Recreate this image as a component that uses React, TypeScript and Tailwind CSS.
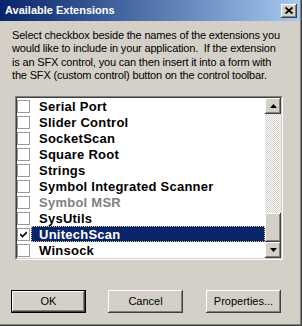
import { type ReactNode } from 'react'

type Ext = { name: string; checked?: boolean; disabled?: boolean; selected?: boolean }

const extensions: Ext[] = [
  { name: 'Serial Port' },
  { name: 'Slider Control' },
  { name: 'SocketScan' },
  { name: 'Square Root' },
  { name: 'Strings' },
  { name: 'Symbol Integrated Scanner' },
  { name: 'Symbol MSR', disabled: true },
  { name: 'SysUtils' },
  { name: 'UnitechScan', checked: true, selected: true },
  { name: 'Winsock' },
]

const raised =
  'bg-[#d4d0c8] shadow-[inset_-1px_-1px_#404040,inset_1px_1px_#ffffff,inset_-2px_-2px_#808080,inset_2px_2px_#d4d0c8]'

function Arrow({ dir }: { dir: 'up' | 'down' }) {
  return (
    <svg width="7" height="4" viewBox="0 0 7 4">
      {dir === 'up' ? <path d="M3.5 0L7 4H0z" fill="#000" /> : <path d="M0 0H7L3.5 4z" fill="#000" />}
    </svg>
  )
}

function Button({ children, isDefault }: { children: ReactNode; isDefault?: boolean }) {
  return (
    <div
      className={
        isDefault
          ? 'flex h-[23px] w-[75px] items-center justify-center border border-black bg-[#d4d0c8] shadow-[inset_-1px_-1px_#404040,inset_1px_1px_#ffffff,inset_-2px_-2px_#808080]'
          : `flex h-[23px] w-[75px] items-center justify-center ${raised}`
      }
    >
      <span className="text-[11px] leading-none text-black">{children}</span>
    </div>
  )
}

function Row({ ext }: { ext: Ext }) {
  return (
    <div className="flex h-[16px] items-center">
      <div className="flex h-[13px] w-[13px] shrink-0 items-center justify-center border border-[#9a9a9a] bg-white">
        {ext.checked && (
          <svg width="7" height="7" viewBox="0 0 7 7">
            <path d="M0 3L2.5 5.5L7 1" stroke="#000" strokeWidth="1.6" fill="none" />
          </svg>
        )}
      </div>
      <div
        className={
          ext.selected
            ? 'ml-[1px] flex h-[16px] flex-1 items-center bg-[#0a246a] pl-[8px] text-white outline outline-1 -outline-offset-1 outline-dotted outline-[#e8cf7a]'
            : 'ml-[1px] flex h-[16px] flex-1 items-center pl-[8px]'
        }
      >
        <span
          className={`text-[13px] font-bold leading-none tracking-[0.25px] ${
            ext.disabled ? 'text-[#808080]' : ext.selected ? 'text-white' : 'text-black'
          }`}
        >
          {ext.name}
        </span>
      </div>
    </div>
  )
}

export default function App() {
  return (
    <div
      className="h-[326px] w-[302px] overflow-hidden border-b border-r border-[#404040] bg-[#d4d0c8]"
      style={{ fontFamily: '"Liberation Sans", Arial, sans-serif' }}
    >
      <div className="flex h-full flex-col border-b border-r border-[#808080]">
        <header className="flex h-[21px] shrink-0 items-center bg-gradient-to-r from-[#0a246a] to-[#a6caf0] pl-[5px] pr-[3px]">
          <span className="flex-1 text-[11px] font-bold text-white">Available Extensions</span>
          <div className={`flex h-[14px] w-[16px] items-center justify-center ${raised}`}>
            <svg width="8" height="7" viewBox="0 0 8 7">
              <path d="M0.5 0.5L7.5 6.5M7.5 0.5L0.5 6.5" stroke="#000" strokeWidth="1.8" />
            </svg>
          </div>
        </header>

        <p className="mt-[8px] h-[54px] whitespace-pre pl-[12px] text-[11px] leading-[13.33px] tracking-[-0.17px] text-black">
          {'Select checkbox beside the names of the extensions you\nwould like to include in your application.  If the extension\nis an SFX control, you can then insert it into a form with\nthe SFX (custom control) button on the control toolbar.'}
        </p>

        <div className="ml-[15px] mt-[13px] h-[164px] w-[268px] border border-b-white border-l-[#808080] border-r-white border-t-[#808080]">
          <div className="flex h-full border border-b-[#d4d0c8] border-l-[#404040] border-r-[#d4d0c8] border-t-[#404040] bg-white">
            <div className="flex flex-1 flex-col">
              {extensions.map((e) => (
                <Row key={e.name} ext={e} />
              ))}
            </div>
            <div className="flex w-[16px] flex-col">
              <div className={`flex h-[16px] items-center justify-center ${raised}`}>
                <Arrow dir="up" />
              </div>
              <div className="flex-1 bg-[image:repeating-conic-gradient(#d4d0c8_0_25%,#ffffff_0_50%)] bg-[length:2px_2px]" />
              <div className={`h-[29px] ${raised}`} />
              <div className={`flex h-[16px] items-center justify-center ${raised}`}>
                <Arrow dir="down" />
              </div>
            </div>
          </div>
        </div>

        <div className="mt-[30px] flex pl-[11px]">
          <Button isDefault>OK</Button>
          <div className="ml-[22px]">
            <Button>Cancel</Button>
          </div>
          <div className="ml-[23px]">
            <Button>Properties...</Button>
          </div>
        </div>
      </div>
    </div>
  )
}
